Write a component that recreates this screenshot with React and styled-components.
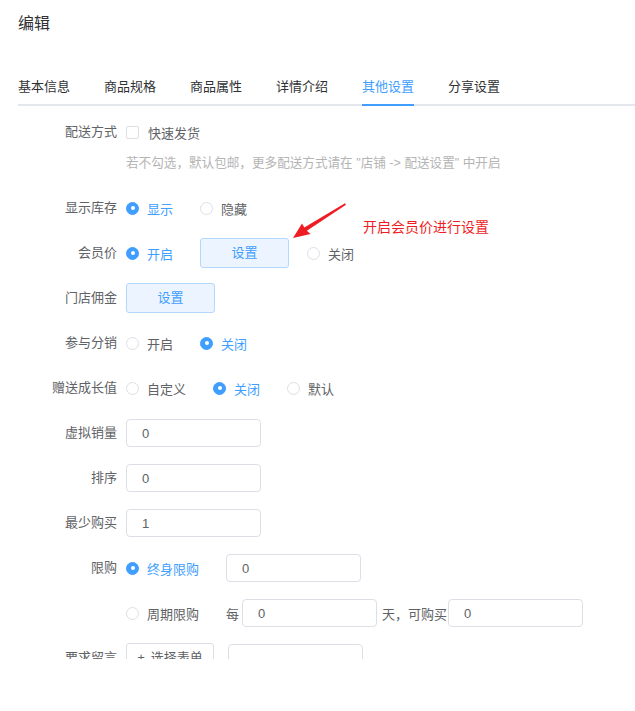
import React from "react";
import styled, { createGlobalStyle } from "styled-components";

const GlobalStyle = createGlobalStyle`
  body {
    margin: 0;
    background: #fff;
    font-family: "Liberation Sans", "Noto Sans CJK SC", sans-serif;
  }
`;

const tabs = ["基本信息", "商品规格", "商品属性", "详情介绍", "其他设置", "分享设置"];

const App = () => {
  return (
    <Page>
      <GlobalStyle />
      <Title>编辑</Title>
      <Tabs>
        {tabs.map((t) => (
          <Tab key={t} $active={t === "其他设置"}>
            {t}
          </Tab>
        ))}
      </Tabs>

      <Form>
        <FormItem>
          <Label>配送方式</Label>
          <Content>
            <Line>
              <Check>
                <Box />
                <span>快速发货</span>
              </Check>
            </Line>
            <Hint>若不勾选，默认包邮，更多配送方式请在 "店铺 -&gt; 配送设置" 中开启</Hint>
          </Content>
        </FormItem>

        <FormItem>
          <Label>显示库存</Label>
          <Line>
            <Radio checked>显示</Radio>
            <Radio>隐藏</Radio>
          </Line>
        </FormItem>

        <FormItem>
          <Label>会员价</Label>
          <Line>
            <Radio checked>开启</Radio>
            <LightButton>设置</LightButton>
            <Radio>关闭</Radio>
          </Line>
        </FormItem>

        <FormItem>
          <Label>门店佣金</Label>
          <Line>
            <LightButton>设置</LightButton>
          </Line>
        </FormItem>

        <FormItem>
          <Label>参与分销</Label>
          <Line>
            <Radio>开启</Radio>
            <Radio checked>关闭</Radio>
          </Line>
        </FormItem>

        <FormItem>
          <Label>赠送成长值</Label>
          <Line>
            <Radio>自定义</Radio>
            <Radio checked>关闭</Radio>
            <Radio>默认</Radio>
          </Line>
        </FormItem>

        <FormItem>
          <Label>虚拟销量</Label>
          <Line>
            <Input defaultValue="0" />
          </Line>
        </FormItem>

        <FormItem>
          <Label>排序</Label>
          <Line>
            <Input defaultValue="0" />
          </Line>
        </FormItem>

        <FormItem>
          <Label>最少购买</Label>
          <Line>
            <Input defaultValue="1" />
          </Line>
        </FormItem>

        <FormItem>
          <Label>限购</Label>
          <Line>
            <Radio checked>终身限购</Radio>
            <Input defaultValue="0" />
          </Line>
        </FormItem>

        <FormItem>
          <Label />
          <Line>
            <Radio>周期限购</Radio>
            <Inline>每</Inline>
            <Input defaultValue="0" />
            <Inline $left={5}>天，可购买</Inline>
            <Input defaultValue="0" />
          </Line>
        </FormItem>

        <FormItem>
          <Label>要求留言</Label>
          <Line>
            <PlainButton>
              <Plus>+</Plus>选择表单
            </PlainButton>
            <Input defaultValue="" />
          </Line>
        </FormItem>
      </Form>

      <Arrow width="66" height="48" viewBox="0 0 66 48">
        <polygon points="60,5.2 61,6.8 20,34 17.6,30.6" fill="#ee1d23" />
        <polygon points="8,40 17,25.5 20.5,31.5 25.5,36" fill="#ee1d23" />
      </Arrow>
      <Note>开启会员价进行设置</Note>
    </Page>
  );
};

const Radio = ({ checked, children }) => (
  <RadioWrap $checked={checked}>
    <Dot $checked={checked} />
    <span>{children}</span>
  </RadioWrap>
);

export default App;

const Page = styled.div`
  position: relative;
  height: 659px;
  overflow: hidden;
  padding-left: 18px;
  box-sizing: border-box;
`;

const Title = styled.div`
  padding-top: 12px;
  font-size: 16px;
  line-height: 24px;
  color: #303133;
`;

const Tabs = styled.div`
  position: relative;
  display: flex;
  height: 40px;
  margin-top: 30px;
  &::after {
    content: "";
    position: absolute;
    left: 0;
    right: 0;
    bottom: 0;
    height: 2px;
    background: #e4e7ed;
  }
`;

const Tab = styled.div`
  position: relative;
  padding: 0 17px;
  font-size: 13px;
  line-height: 42px;
  color: ${(p) => (p.$active ? "#409eff" : "#303133")};
  &:first-child {
    padding-left: 0;
  }
  &::after {
    content: "";
    display: ${(p) => (p.$active ? "block" : "none")};
    position: absolute;
    left: 17px;
    right: 17px;
    bottom: 0;
    height: 2px;
    background: #409eff;
    z-index: 1;
  }
`;

const Form = styled.div`
  margin-top: 11px;
`;

const FormItem = styled.div`
  display: flex;
  margin-bottom: 15px;
`;

const Label = styled.div`
  flex-shrink: 0;
  width: 108px;
  padding-right: 9px;
  box-sizing: border-box;
  text-align: right;
  font-size: 13px;
  line-height: 30px;
  color: #606266;
`;

const Content = styled.div`
  display: flex;
  flex-direction: column;
`;

const Line = styled.div`
  display: flex;
  align-items: center;
  height: 30px;
  font-size: 13px;
  color: #606266;
`;

const Hint = styled.div`
  font-size: 12.6px;
  line-height: 30px;
  margin-top: 1px;
  color: #b4b4b4;
  white-space: nowrap;
`;

const Check = styled.label`
  display: inline-flex;
  align-items: center;
  span {
    padding-left: 9px;
  }
`;

const Box = styled.i`
  width: 11px;
  height: 11px;
  border: 1px solid #dcdfe6;
  border-radius: 2px;
  background: #fff;
`;

const RadioWrap = styled.label`
  display: inline-flex;
  align-items: center;
  margin-right: 27px;
  color: ${(p) => (p.$checked ? "#409eff" : "#606266")};
  span {
    padding-left: 8px;
  }
`;

const Dot = styled.i`
  position: relative;
  width: 11px;
  height: 11px;
  border-radius: 50%;
  border: 1px solid ${(p) => (p.$checked ? "#409eff" : "#dcdfe6")};
  background: ${(p) => (p.$checked ? "#409eff" : "#fff")};
  &::after {
    content: "";
    display: ${(p) => (p.$checked ? "block" : "none")};
    position: absolute;
    left: 50%;
    top: 50%;
    width: 4px;
    height: 4px;
    margin: -2px 0 0 -2px;
    border-radius: 50%;
    background: #fff;
  }
`;

const LightButton = styled.div`
  width: 89px;
  height: 30px;
  box-sizing: border-box;
  margin-right: 18px;
  border: 1px solid #b3d8ff;
  border-radius: 3px;
  background: #ecf5ff;
  color: #409eff;
  font-size: 13px;
  line-height: 28px;
  text-align: center;
`;

const PlainButton = styled(LightButton)`
  width: 88px;
  margin-right: 14px;
  border-color: #dcdfe6;
  background: #fff;
  color: #606266;
`;

const Plus = styled.span`
  margin-right: 6px;
  font-weight: 300;
`;

const Input = styled.input`
  width: 135px;
  height: 28px;
  box-sizing: border-box;
  padding: 0 15px;
  border: 1px solid #dcdfe6;
  border-radius: 4px;
  outline: none;
  font-family: "Liberation Sans", "Noto Sans CJK SC", sans-serif;
  font-size: 13px;
  color: #606266;
`;

const Inline = styled.span`
  margin: 0 ${(p) => (p.$left ? 1 : 3)}px 0 ${(p) => p.$left || 0}px;
  color: #606266;
`;

const Arrow = styled.svg`
  position: absolute;
  left: 285px;
  top: 198px;
`;

const Note = styled.div`
  position: absolute;
  left: 363px;
  top: 217px;
  font-size: 14px;
  line-height: 20px;
  color: #ee1d23;
`;
